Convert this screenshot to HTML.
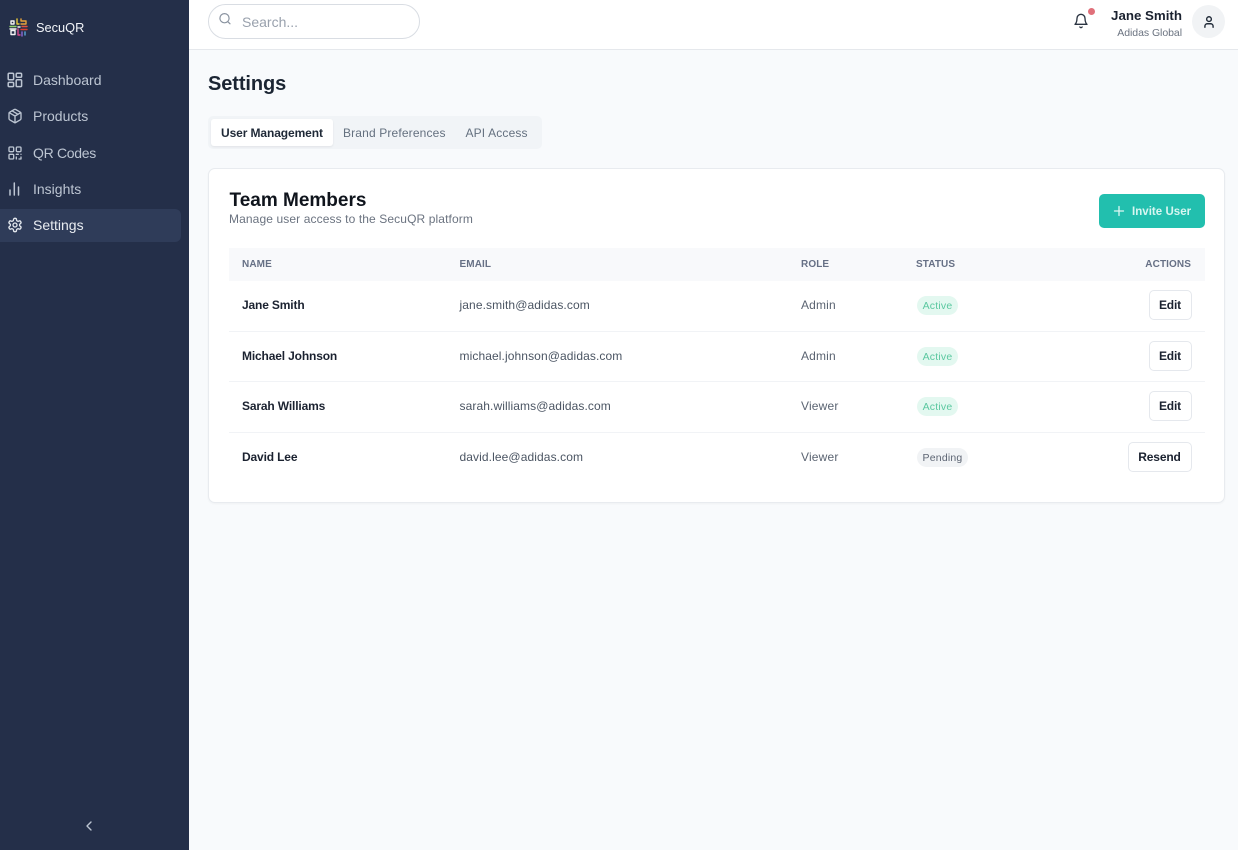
<!DOCTYPE html>
<html><head><meta charset="utf-8"><style>
*{box-sizing:border-box}
html,body{margin:0;padding:0;width:1238px;height:850px;overflow:hidden;background:#f8fafc;font-family:"Liberation Sans",sans-serif}
.t{position:absolute;white-space:nowrap;line-height:20px}
.b{position:absolute}
.side{position:absolute;left:0;top:0;width:189px;height:850px;background:#242f49}
.nav{color:#bcc5d2;font-size:14px;left:33px}
svg{position:absolute;fill:none;stroke-linecap:round;stroke-linejoin:round}
.name{left:242px;font-size:12px;font-weight:bold;color:#1b2230;letter-spacing:-.15px}
.email{left:459.5px;font-size:12px;color:#4b5563;letter-spacing:.1px}
.role{left:801px;font-size:12px;color:#5b6472;letter-spacing:.17px}
.hd{font-size:10px;font-weight:bold;color:#667085;letter-spacing:.1px;top:255px}
.pill{position:absolute;left:917px;height:19px;border-radius:10px;font-size:10.5px;line-height:21px;text-align:center;letter-spacing:.2px}
.act{background:#e3f8f0;color:#5bc8a0;width:41px}
.pen{background:#f1f3f5;color:#5d6573;width:51px}
.btn{position:absolute;height:30px;background:#fff;border:1px solid #e5e8ed;border-radius:5px;font-size:12px;font-weight:bold;color:#1b2230;text-align:center;line-height:28px;letter-spacing:-.15px;padding-right:1px}
.line{position:absolute;left:229px;width:976px;height:1px;background:#f1f3f6}
</style></head><body>
<div class="side"></div>
<svg style="left:9px;top:18px" width="19" height="19" viewBox="0 0 19 19" stroke-width="1.4" stroke-linecap="butt">
<path d="M2 3v3h3V3z" stroke="#f4f4f4"/><path d="M8 1v5h2" stroke="#e8c93a"/><path d="M12 1v2h5v3h-5" stroke="#e8a33a"/><path d="M1 8.5h6" stroke="#8fd06a"/><path d="M9 9h2" stroke="#f4f4f4"/><path d="M13 8.5h5" stroke="#e2533f"/><path d="M12 11.5h6" stroke="#d9402f"/><path d="M2 12.5v4h4v-4z" stroke="#f4f4f4"/><path d="M1 11h6" stroke="#f4f4f4"/><path d="M9 11v6h2" stroke="#d94a8a"/><path d="M13 14v4" stroke="#8a6ad8"/><path d="M16 14v3" stroke="#5aa5d8"/>
</svg>
<div class="t" style="left:36px;top:18px;font-size:12.8px;color:#f1f4f8">SecuQR</div>
<div class="b" style="left:0;top:209px;width:181px;height:33px;background:#2f3c59;border-radius:0 6px 6px 0"></div>

<svg style="left:7px;top:72px" width="16" height="16" viewBox="0 0 16 16" stroke="#bcc5d2" stroke-width="1.5"><rect x="1.2" y="1.2" width="5.4" height="6.6" rx="1"/><rect x="9.2" y="1.2" width="5.4" height="4" rx="1"/><rect x="9.2" y="7.8" width="5.4" height="6.8" rx="1"/><rect x="1.2" y="10.4" width="5.4" height="4.2" rx="1"/></svg>
<div class="t nav" style="top:70px">Dashboard</div>
<svg style="left:7px;top:108px" width="16" height="16" viewBox="0 0 24 24" stroke="#bcc5d2" stroke-width="2"><path d="M21 8a2 2 0 0 0-1-1.73l-7-4a2 2 0 0 0-2 0l-7 4A2 2 0 0 0 3 8v8a2 2 0 0 0 1 1.73l7 4a2 2 0 0 0 2 0l7-4A2 2 0 0 0 21 16Z"/><path d="m3.3 7 8.7 5 8.7-5M12 22V12M7.5 4.27l9 5.15"/></svg>
<div class="t nav" style="top:106px">Products</div>
<svg style="left:7px;top:145px" width="16" height="16" viewBox="0 0 24 24" stroke="#bcc5d2" stroke-width="2"><rect x="3" y="3" width="7" height="7" rx="1.5"/><rect x="14" y="3" width="7" height="7" rx="1.5"/><rect x="3" y="14" width="7" height="7" rx="1.5"/><path d="M14 14h3M21 14v.01M14 18v3M18 21h3v-3"/></svg>
<div class="t nav" style="top:143px;letter-spacing:-.3px">QR Codes</div>
<svg style="left:7px;top:181px" width="16" height="16" viewBox="0 0 16 16" stroke="#bcc5d2" stroke-width="1.5"><path d="M3 14V9M7.3 14V2M11.5 14V6"/></svg>
<div class="t nav" style="top:179px">Insights</div>
<svg style="left:7px;top:217px" width="16" height="16" viewBox="0 0 24 24" stroke="#e4e8ee" stroke-width="2"><path d="M12.22 2h-.44a2 2 0 0 0-2 2v.18a2 2 0 0 1-1 1.73l-.43.25a2 2 0 0 1-2 0l-.15-.08a2 2 0 0 0-2.73.73l-.22.38a2 2 0 0 0 .73 2.73l.15.1a2 2 0 0 1 1 1.72v.51a2 2 0 0 1-1 1.74l-.15.09a2 2 0 0 0-.73 2.73l.22.38a2 2 0 0 0 2.73.73l.15-.08a2 2 0 0 1 2 0l.43.25a2 2 0 0 1 1 1.73V20a2 2 0 0 0 2 2h.44a2 2 0 0 0 2-2v-.18a2 2 0 0 1 1-1.73l.43-.25a2 2 0 0 1 2 0l.15.08a2 2 0 0 0 2.73-.73l.22-.39a2 2 0 0 0-.73-2.73l-.15-.08a2 2 0 0 1-1-1.74v-.5a2 2 0 0 1 1-1.74l.15-.09a2 2 0 0 0 .73-2.73l-.22-.38a2 2 0 0 0-2.73-.73l-.15.08a2 2 0 0 1-2 0l-.43-.25a2 2 0 0 1-1-1.73V4a2 2 0 0 0-2-2z"/><circle cx="12" cy="12" r="3"/></svg>
<div class="t nav" style="top:215px;color:#e8ecf1">Settings</div>
<svg style="left:83px;top:820px" width="12" height="12" viewBox="0 0 12 12" stroke="#bcc5d2" stroke-width="1.4"><path d="M8 2 4 6l4 4"/></svg>

<div class="b" style="left:189px;top:0;width:1049px;height:50px;background:#fff;border-bottom:1px solid #e5e8ec"></div>
<div class="b" style="left:208px;top:4px;width:212px;height:35px;background:#fff;border:1px solid #d9dde3;border-radius:18px"></div>
<svg style="left:218px;top:12px" width="14" height="14" viewBox="0 0 14 14" stroke="#8a93a0" stroke-width="1.2"><circle cx="6.5" cy="6.2" r="4.6"/><path d="m10 9.8 2 2"/></svg>
<div class="t" style="left:242px;top:12px;font-size:14px;color:#99a1ad">Search...</div>
<svg style="left:1073px;top:13px" width="16" height="16" viewBox="0 0 24 24" stroke="#2b3442" stroke-width="2"><path d="M6 8a6 6 0 0 1 12 0c0 7 3 9 3 9H3s3-2 3-9"/><path d="M10.3 21a1.9 1.9 0 0 0 3.4 0"/></svg>
<div class="b" style="left:1087.5px;top:8px;width:7px;height:7px;border-radius:50%;background:#e0707a"></div>
<div class="t" style="right:56px;top:6px;font-size:13.3px;font-weight:bold;color:#1b2230">Jane Smith</div>
<div class="t" style="right:56px;top:23px;font-size:10.5px;color:#6b7380;letter-spacing:-.05px">Adidas Global</div>
<div class="b" style="left:1192px;top:5px;width:33px;height:33px;border-radius:50%;background:#f1f3f5"></div>
<svg style="left:1202px;top:15px" width="14" height="14" viewBox="0 0 24 24" stroke="#1f2937" stroke-width="2.4"><path d="M19 21v-2a4 4 0 0 0-4-4H9a4 4 0 0 0-4 4v2"/><circle cx="12" cy="7" r="4"/></svg>

<div class="t" style="left:208px;top:70px;line-height:28px;font-size:20px;font-weight:bold;color:#1b2533;letter-spacing:-.1px">Settings</div>

<div class="b" style="left:208px;top:116px;width:334px;height:33px;background:#f1f4f7;border-radius:5px"></div>
<div class="b" style="left:211px;top:119px;width:122px;height:27px;background:#fff;border-radius:3px;box-shadow:0 1px 2px rgba(0,0,0,.07)"></div>
<div class="t" style="left:221px;top:123px;font-size:12px;font-weight:bold;color:#1f2937;letter-spacing:-.1px">User Management</div>
<div class="t" style="left:343px;top:123px;font-size:12px;color:#64707f;letter-spacing:.15px">Brand Preferences</div>
<div class="t" style="left:465.5px;top:123px;font-size:12px;color:#64707f;letter-spacing:.15px">API Access</div>

<div class="b" style="left:208px;top:168px;width:1017px;height:335px;background:#fff;border:1px solid #e8ebef;border-radius:7px;box-shadow:0 1px 2px rgba(0,0,0,.04)"></div>
<div class="t" style="left:229.5px;top:189px;line-height:24px;font-size:19px;font-weight:bold;color:#0f141c">Team Members</div>
<div class="t" style="left:229px;top:209px;font-size:12px;color:#6b7380;letter-spacing:.11px">Manage user access to the SecuQR platform</div>
<div class="b" style="left:1099px;top:194px;width:106px;height:34px;background:#22bfae;border-radius:5px"></div>
<svg style="left:1112px;top:204px" width="14" height="14" viewBox="0 0 14 14" stroke="#dff7f3" stroke-width="1.3"><path d="M7 2.5v9M2.5 7h9"/></svg>
<div class="t" style="left:1132px;top:202px;font-size:11.5px;font-weight:bold;color:#d8f6f1;letter-spacing:.03px">Invite User</div>

<div class="b" style="left:229px;top:248px;width:976px;height:33px;background:#f8f9fb"></div>
<div class="t hd" style="left:242px">NAME</div>
<div class="t hd" style="left:459.5px">EMAIL</div>
<div class="t hd" style="left:801px">ROLE</div>
<div class="t hd" style="left:916px">STATUS</div>
<div class="t hd" style="right:47px">ACTIONS</div>

<div class="t name" style="top:295px">Jane Smith</div>
<div class="t email" style="top:295px">jane.smith@adidas.com</div>
<div class="t role" style="top:295px">Admin</div>
<div class="pill act" style="top:296px">Active</div>
<div class="btn" style="left:1149px;top:290px;width:43px">Edit</div>
<div class="line" style="top:331px"></div>

<div class="t name" style="top:346px">Michael Johnson</div>
<div class="t email" style="top:346px">michael.johnson@adidas.com</div>
<div class="t role" style="top:346px">Admin</div>
<div class="pill act" style="top:347px">Active</div>
<div class="btn" style="left:1149px;top:341px;width:43px">Edit</div>
<div class="line" style="top:381px"></div>

<div class="t name" style="top:396px">Sarah Williams</div>
<div class="t email" style="top:396px">sarah.williams@adidas.com</div>
<div class="t role" style="top:396px">Viewer</div>
<div class="pill act" style="top:397px">Active</div>
<div class="btn" style="left:1149px;top:391px;width:43px">Edit</div>
<div class="line" style="top:432px"></div>

<div class="t name" style="top:447px">David Lee</div>
<div class="t email" style="top:447px">david.lee@adidas.com</div>
<div class="t role" style="top:447px">Viewer</div>
<div class="pill pen" style="top:448px">Pending</div>
<div class="btn" style="left:1128px;top:442px;width:64px">Resend</div>
</body></html>
